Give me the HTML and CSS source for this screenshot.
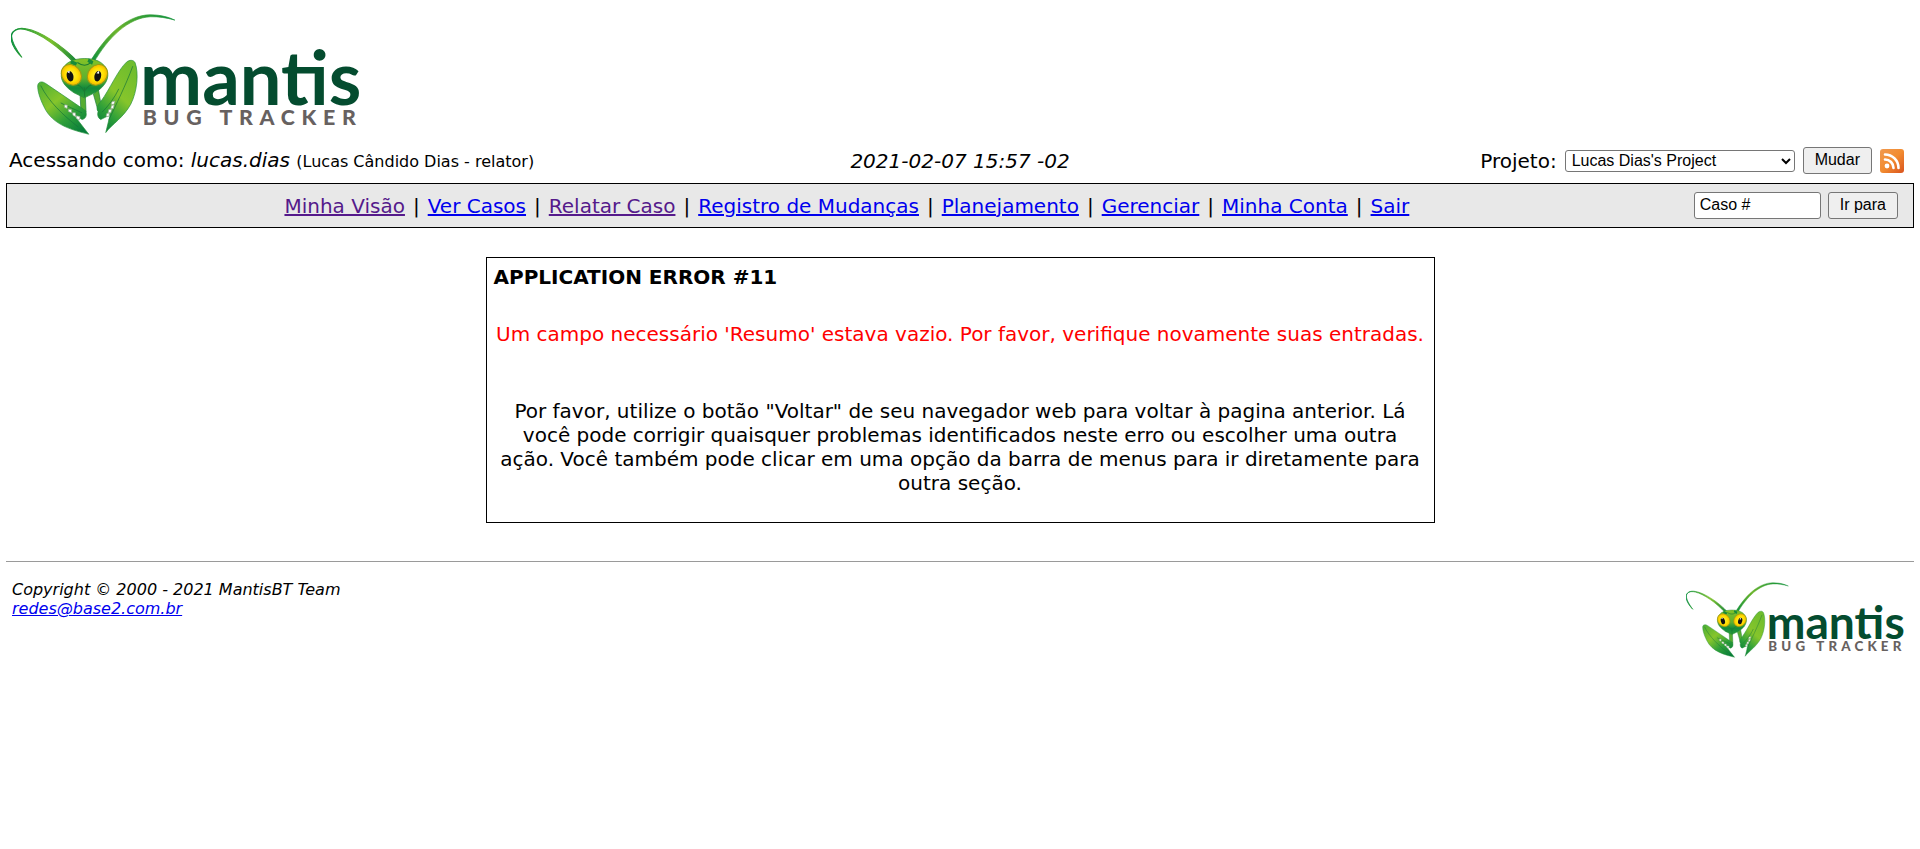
FILE: index.html
```html
<!DOCTYPE html>
<html lang="pt-BR">
<head>
<meta charset="utf-8">
<title>MantisBT</title>
<link rel="stylesheet" href="styles.css">
</head>
<body>
<svg class="defs" aria-hidden="true">
  <defs>
    <linearGradient id="antenna" x1="0" y1="1" x2="1" y2="0">
      <stop offset="0" stop-color="#0a8f3c"/><stop offset=".5" stop-color="#6db52c"/><stop offset="1" stop-color="#0a8f3c"/>
    </linearGradient>
    <linearGradient id="antenna-left" x1="0" y1="0" x2="1" y2="0">
      <stop offset="0" stop-color="#0a8f3c"/><stop offset=".6" stop-color="#7cc02c"/><stop offset="1" stop-color="#0d8038"/>
    </linearGradient>
    <linearGradient id="head" x1="0" y1="0" x2="0" y2="1">
      <stop offset="0" stop-color="#86c226"/><stop offset=".5" stop-color="#5cb130"/><stop offset=".75" stop-color="#128a3c"/><stop offset="1" stop-color="#2c9d3a"/>
    </linearGradient>
    <linearGradient id="claw-left" x1="0" y1="0" x2=".8" y2="1">
      <stop offset="0" stop-color="#4aae36"/><stop offset=".4" stop-color="#86c52b"/><stop offset=".7" stop-color="#2fa039"/><stop offset="1" stop-color="#087d3a"/>
    </linearGradient>
    <linearGradient id="claw-right" x1=".7" y1="0" x2=".2" y2="1">
      <stop offset="0" stop-color="#6fbd2e"/><stop offset=".45" stop-color="#86c52b"/><stop offset=".75" stop-color="#2fa039"/><stop offset="1" stop-color="#087d3a"/>
    </linearGradient>
    <radialGradient id="eye">
      <stop offset="0" stop-color="#fff04a"/><stop offset=".65" stop-color="#ffe000"/><stop offset="1" stop-color="#f2b600"/>
    </radialGradient>
    <linearGradient id="feed" x1="0" y1="0" x2="1" y2="1">
      <stop offset="0" stop-color="#f09a50"/><stop offset=".5" stop-color="#f28c30"/><stop offset="1" stop-color="#d9531e"/>
    </linearGradient>
  </defs>
  <symbol id="mantis-logo" viewBox="33 40 1046 362">
    <path d="M66 170C50 148 34 123 35 105C37 88 54 81 78 87C118 97 176 136 226 190L234 184C186 132 120 91 78 84C52 79 34 89 33 109C33 130 50 154 66 170Z" fill="url(#antenna-left)" stroke="url(#antenna-left)" stroke-width="3"/>
    <path d="M270 183C316 106 378 43 450 42C484 42 510 51 524 58C500 51 474 47 450 48C386 51 324 109 280 187Z" fill="url(#antenna)" stroke="url(#antenna)" stroke-width="2"/>
    <path d="M240 280L256 288L258 334L242 320ZM280 280L295 266L303 312L294 330Z" fill="#56ad32" stroke="#187d38" stroke-width="2"/>
    <path d="M113 255C114 242 126 240 137 248L256 329C262 343 257 354 246 356L218 338L266 400C220 388 158 374 132 318C118 290 113 270 113 255Z" fill="url(#claw-left)" stroke="#238f38" stroke-width="2"/>
    <path d="M294 332C288 324 292 312 302 302C330 264 352 210 379 184C389 176 401 177 405 186C416 216 412 270 392 310C370 350 336 370 317 395L330 342L302 356C294 352 291 342 294 332Z" fill="url(#claw-right)" stroke="#238f38" stroke-width="2"/>
    <path d="M122 254C144 300 190 344 234 378M182 306C200 316 226 326 246 336M398 196C376 256 348 310 326 358M356 264C344 290 326 314 306 334" fill="none" stroke="#15733a" stroke-width="2"/>
    <path d="M194 312l8 1-1 10-8-4zM205 325l9 1 1 10-10-4zM217 336l9 0 1 11-8-3zM229 345l11 2-2 10-9-4zM336 302l9-1-4 10-8-1zM334 314l8-2-2 11-8 1zM326 326l9-1-3 11-8 1zM320 338l9-3-3 12-8-1z" fill="#fff" stroke="#8fa889" stroke-width="2"/>
    <path d="M184 218C188 188 216 173 254 173C292 173 317 188 323 216C326 242 307 262 284 276L253 291L222 276C198 260 181 242 184 218Z" fill="url(#head)" stroke="#258b36" stroke-width="2"/>
    <path d="M232 185C246 195 262 195 274 184M253 260L254 288M226 252C238 250 246 260 253 272C260 260 270 251 281 251" fill="none" stroke="#1b7b33" stroke-width="3"/>
    <path d="M215 178l17 8-5 9-17-8zM266 173l14 8-4 11-14-9z" fill="#168a3a"/>
    <ellipse cx="214" cy="222" rx="28" ry="33" transform="rotate(-42 214 222)" fill="url(#eye)" stroke="#9a9c12" stroke-width="3"/>
    <ellipse cx="292" cy="222" rx="28" ry="33" transform="rotate(42 292 222)" fill="url(#eye)" stroke="#9a9c12" stroke-width="3"/>
    <ellipse cx="210" cy="226" rx="10" ry="16" transform="rotate(-14 210 226)" fill="#111"/>
    <ellipse cx="293" cy="226" rx="10" ry="16" transform="rotate(14 293 226)" fill="#111"/>
    <path d="M201 213l8-3-1 8zM289 217l8-7 0 9z" fill="#fff"/>
    <text class="logo-name" x="420" y="313">mantis</text>
    <text class="logo-sub" x="428" y="372">BUG TRACKER</text>
  </symbol>
</svg>

<header>
  <a class="logo-link" href="#"><svg class="logo" role="img" aria-label="Mantis Bug Tracker"><use href="#mantis-logo"/></svg></a>
  <div class="login-info">
    <div class="user">Acessando como: <em>lucas.dias</em> <span class="small">(Lucas Cândido Dias - relator)</span></div>
    <div class="date">2021-02-07 15:57 -02</div>
    <form class="project">
      <label for="project">Projeto:</label>
      <select id="project"><option>Lucas Dias's Project</option></select>
      <button type="button">Mudar</button>
      <a class="rss" href="#" aria-label="RSS"><svg viewBox="0 0 24 24">
        <rect width="24" height="24" rx="3" fill="url(#feed)"/>
        <circle cx="7" cy="17" r="2.4" fill="#fff"/>
        <path d="M5 10.5A8.500 8.500 0 0 1 13.500 19M5 5.500A13.500 13.500 0 0 1 18.500 19" fill="none" stroke="#fff" stroke-width="2.600" stroke-linecap="round"/>
      </svg></a>
    </form>
  </div>
</header>

<div class="menu">
  <nav>
    <a class="visited" href="#">Minha Visão</a>
    <span>|</span>
    <a href="#">Ver Casos</a>
    <span>|</span>
    <a class="visited" href="#">Relatar Caso</a>
    <span>|</span>
    <a href="#">Registro de Mudanças</a>
    <span>|</span>
    <a href="#">Planejamento</a>
    <span>|</span>
    <a href="#">Gerenciar</a>
    <span>|</span>
    <a href="#">Minha Conta</a>
    <span>|</span>
    <a href="#">Sair</a>
  </nav>
  <form class="jump">
    <input type="text" value="Caso #" aria-label="Caso #">
    <button type="button">Ir para</button>
  </form>
</div>

<main>
  <section class="error">
    <h1>APPLICATION ERROR #11</h1>
    <p class="message">Um campo necessário 'Resumo' estava vazio. Por favor, verifique novamente suas entradas.</p>
    <p class="help">Por favor, utilize o botão "Voltar" de seu navegador web para voltar à pagina anterior. Lá você pode corrigir quaisquer problemas identificados neste erro ou escolher uma outra ação. Você também pode clicar em uma opção da barra de menus para ir diretamente para outra seção.</p>
  </section>
</main>

<hr>
<footer>
  <address>Copyright © 2000 - 2021 MantisBT Team<br><a href="#">redes@base2.com.br</a></address>
  <a class="logo-link" href="#"><svg class="logo logo-footer" role="img" aria-label="Mantis Bug Tracker"><use href="#mantis-logo"/></svg></a>
</footer>
</body>
</html>
```

FILE: styles.css
```css
* { box-sizing: border-box; }

body {
  margin: 0;
  padding: 14px 6px;
  background: #fff;
  color: #000;
  font-family: Verdana, "DejaVu Sans", sans-serif;
  font-size: 20px;
  line-height: 24px;
}

a { color: #0000ee; }
a.visited { color: #551a8b; }

.defs { position: absolute; width: 0; height: 0; }

.logo-link { display: block; width: fit-content; }
.logo { display: block; width: 349px; height: 121px; }
header .logo { margin-left: 5px; }
.logo-footer { width: 218px; height: 76px; }
.logo-name {
  font-family: Lato, sans-serif;
  font-weight: 700;
  font-size: 222px;
  fill: #044c2f;
}
.logo-sub {
  font-family: Lato, sans-serif;
  font-weight: 900;
  font-size: 64px;
  letter-spacing: 20px;
  fill: #676160;
}

.login-info {
  display: grid;
  grid-template-columns: 1fr auto 1fr;
  align-items: center;
  padding: 8px 3px 5px;
}
.small { font-size: 16px; }
.date { font-style: italic; }
.project {
  display: flex;
  justify-content: flex-end;
  align-items: center;
  gap: 8px;
  padding: 4px 7px;
}

button, select, input {
  font-family: Arial, "Liberation Sans", sans-serif;
  font-size: 16px;
  line-height: 18px;
  color: #000;
  border: 1px solid #767676;
  border-radius: 3px;
}
button { padding: 3px 11px 4px; background: #efefef; }
select { width: 230px; height: 22px; padding: 0 2px; background: #fff; }
input { width: 127px; height: 27px; padding: 3px 5px 4px; background: #fff; }
.rss svg { display: block; width: 24px; height: 24px; }

.menu {
  display: flex;
  align-items: center;
  border: 1px solid #000;
  background: #e8e8e8;
  padding: 8px 15px 8px 0;
}
nav { flex: 1; display: flex; justify-content: center; gap: 0 8px; }
.jump { display: flex; gap: 7px; padding-left: 7px; }

main { padding: 29px 5px 38px; }
.error {
  width: 50%;
  margin: 0 auto;
  border: 1px solid #000;
  padding: 7px 7px 27px;
}
h1 { margin: 0; font-size: 20px; line-height: 24px; }
p { margin: 0; text-align: center; }
.message { margin-top: 33px; color: #ff0000; }
.help { margin-top: 53px; }

hr { margin: 0; border: 0; border-top: 1px solid #9a9a9a; }
footer {
  display: flex;
  justify-content: space-between;
  align-items: flex-start;
  padding: 18px 10px 0 6px;
}
footer .logo { margin-top: 2px; }
address { font-size: 16px; line-height: 19px; }
```
